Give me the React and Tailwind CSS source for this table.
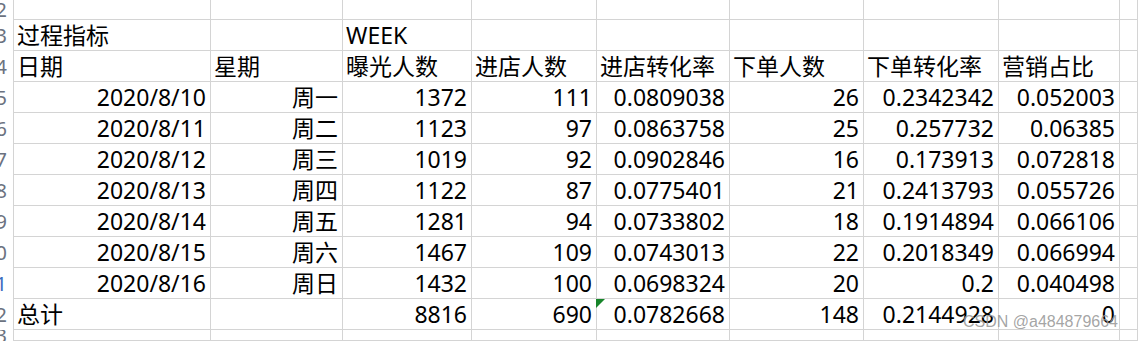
import React from "react";

const COLS = "grid-cols-[14px_197px_132px_129px_125px_133px_134px_135px_121px_1fr]";

const rows = [
  { n: "2", h: "h-[20px]", cells: [] },
  { n: "3", cells: [{ t: "过程指标" }, null, { t: "WEEK" }] },
  {
    n: "4",
    cells: ["日期", "星期", "曝光人数", "进店人数", "进店转化率", "下单人数", "下单转化率", "营销占比"].map((t) => ({ t })),
  },
  { n: "5", data: ["2020/8/10", "周一", "1372", "111", "0.0809038", "26", "0.2342342", "0.052003"] },
  { n: "6", data: ["2020/8/11", "周二", "1123", "97", "0.0863758", "25", "0.257732", "0.06385"] },
  { n: "7", data: ["2020/8/12", "周三", "1019", "92", "0.0902846", "16", "0.173913", "0.072818"] },
  { n: "8", data: ["2020/8/13", "周四", "1122", "87", "0.0775401", "21", "0.2413793", "0.055726"] },
  { n: "9", data: ["2020/8/14", "周五", "1281", "94", "0.0733802", "18", "0.1914894", "0.066106"] },
  { n: "10", data: ["2020/8/15", "周六", "1467", "109", "0.0743013", "22", "0.2018349", "0.066994"] },
  { n: "11", blue: true, data: ["2020/8/16", "周日", "1432", "100", "0.0698324", "20", "0.2", "0.040498"] },
  {
    n: "12",
    cells: [
      { t: "总计" },
      null,
      { t: "8816", r: true },
      { t: "690", r: true },
      { t: "0.0782668", r: true, flag: true },
      { t: "148", r: true },
      { t: "0.2144928", r: true },
      { t: "0", r: true },
    ],
  },
  { n: "13", h: "h-[11px]", cells: [] },
];

function Row({ row }) {
  const cells = row.data ? row.data.map((t) => ({ t, r: true })) : row.cells;
  const list = Array.from({ length: 9 }, (_, i) => cells[i] || null);
  const height = row.h || "h-[31px]";
  return (
    <div className={`grid ${COLS} ${height}`}>
      {/* row number, cut at the left edge */}
      <div className="border-r border-[#d4d4d4] overflow-hidden flex items-center justify-end">
        <span
          className={`mr-[6px] text-[20px] leading-none whitespace-nowrap ${
            row.blue ? "text-[#3d6cc0]" : "text-[#6b7280]"
          }`}
        >
          {row.n}
        </span>
      </div>
      {list.map((c, i) => (
        <div
          key={i}
          className={`relative border-r border-b border-[#d4d4d4] flex items-center overflow-visible whitespace-nowrap ${
            c && c.r ? "justify-end pr-[4px]" : "justify-start pl-[3px]"
          }`}
        >
          {c && c.flag && (
            <span className="absolute -left-px top-0 w-0 h-0 border-t-[9px] border-r-[9px] border-t-[#17852a] border-r-transparent" />
          )}
          {c && c.t}
        </div>
      ))}
    </div>
  );
}

export default function App() {
  return (
    <div className="relative w-[1138px] h-[341px] overflow-hidden bg-white text-black text-[23px] leading-none font-['Noto_Sans','Noto_Sans_CJK_SC',sans-serif]">
      {rows.map((row) => (
        <Row key={row.n} row={row} />
      ))}

      {/* watermark */}
      <div className="absolute left-[963px] top-[314px] text-[16px] leading-none text-[#9a9a9a]/90 font-['Liberation_Sans',sans-serif] whitespace-nowrap">
        CSDN @a484879664
      </div>
    </div>
  );
}
